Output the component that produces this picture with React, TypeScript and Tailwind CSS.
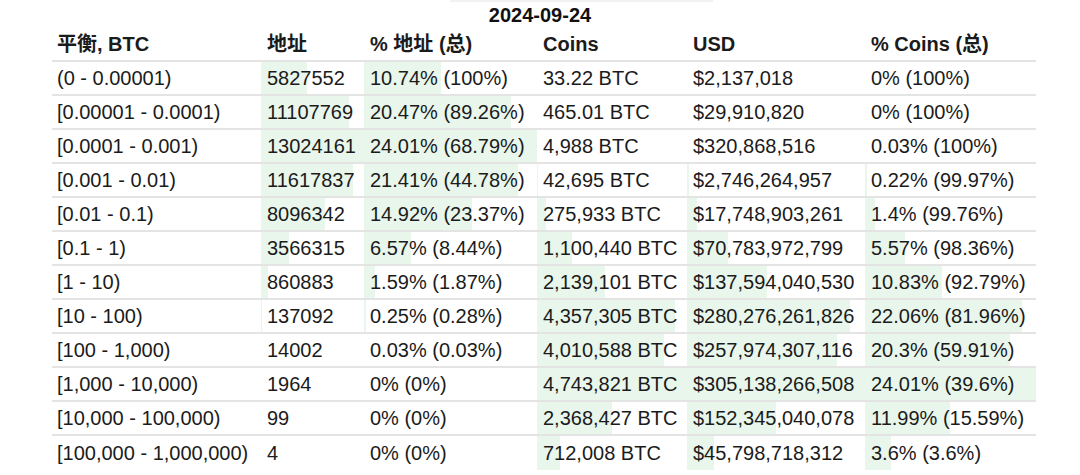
import React from 'react';

type Row = [string, string, string, string, string, string];

const rows: Row[] = [
  ['(0 - 0.00001)', '5827552', '10.74% (100%)', '33.22 BTC', '$2,137,018', '0% (100%)'],
  ['[0.00001 - 0.0001)', '11107769', '20.47% (89.26%)', '465.01 BTC', '$29,910,820', '0% (100%)'],
  ['[0.0001 - 0.001)', '13024161', '24.01% (68.79%)', '4,988 BTC', '$320,868,516', '0.03% (100%)'],
  ['[0.001 - 0.01)', '11617837', '21.41% (44.78%)', '42,695 BTC', '$2,746,264,957', '0.22% (99.97%)'],
  ['[0.01 - 0.1)', '8096342', '14.92% (23.37%)', '275,933 BTC', '$17,748,903,261', '1.4% (99.76%)'],
  ['[0.1 - 1)', '3566315', '6.57% (8.44%)', '1,100,440 BTC', '$70,783,972,799', '5.57% (98.36%)'],
  ['[1 - 10)', '860883', '1.59% (1.87%)', '2,139,101 BTC', '$137,594,040,530', '10.83% (92.79%)'],
  ['[10 - 100)', '137092', '0.25% (0.28%)', '4,357,305 BTC', '$280,276,261,826', '22.06% (81.96%)'],
  ['[100 - 1,000)', '14002', '0.03% (0.03%)', '4,010,588 BTC', '$257,974,307,116', '20.3% (59.91%)'],
  ['[1,000 - 10,000)', '1964', '0% (0%)', '4,743,821 BTC', '$305,138,266,508', '24.01% (39.6%)'],
  ['[10,000 - 100,000)', '99', '0% (0%)', '2,368,427 BTC', '$152,345,040,078', '11.99% (15.59%)'],
  ['[100,000 - 1,000,000)', '4', '0% (0%)', '712,008 BTC', '$45,798,718,312', '3.6% (3.6%)'],
];

const headers = ['平衡, BTC', '地址', '% 地址 (总)', 'Coins', 'USD', '% Coins (总)'];

// first number in the cell, commas and $ stripped
const num = (s: string) => parseFloat(s.split(' ')[0].replace(/[$,%]/g, '')) || 0;

const maxOf = (col: number) => Math.max(...rows.map((r) => num(r[col])));
const maxes = [0, 1, 2, 3, 4, 5].map((c) => (c === 0 ? 0 : maxOf(c)));

const BAR = '#e8f6eb';

const cols = 'grid grid-cols-[209px_103px_173px_150px_178px_171px]';

export default function App() {
  return (
    <div
      className="w-[1080px] h-[475px] bg-white text-[#1b1b1b] overflow-hidden"
      style={{ fontFamily: '"Liberation Sans", "Noto Sans CJK SC", sans-serif' }}
    >
      <div className="ml-[450px] w-[263px] h-[2px] bg-[#f2f2f2]" />
      <div className="h-[26px] flex items-center justify-center text-[20px] font-bold text-[#111]">
        2024-09-24
      </div>

      <div className="ml-[52px] w-[984px]">
        <div className={`${cols} h-[34px] border-b-2 border-[#e4e4e4] text-[20px] font-bold`}>
          {headers.map((h) => (
            <div key={h} className="flex items-center pl-[6px] first:pl-[5px] whitespace-nowrap">
              {h}
            </div>
          ))}
        </div>

        {rows.map((r, i) => (
          <div
            key={r[0]}
            className={`${cols} h-[34px] text-[20px] ${i < rows.length - 1 ? 'border-b-2 border-[#e4e4e4]' : ''}`}
          >
            {r.map((cell, c) => {
              const pct = c === 0 ? 0 : (num(cell) / maxes[c]) * 100;
              return (
                <div
                  key={c}
                  className={`flex items-center whitespace-nowrap ${c === 0 ? 'pl-[5px]' : 'pl-[6px]'}`}
                  style={
                    c === 0
                      ? undefined
                      : { background: `linear-gradient(to right, ${BAR} ${pct}%, transparent ${pct}%)` }
                  }
                >
                  {cell}
                </div>
              );
            })}
          </div>
        ))}
      </div>
    </div>
  );
}
